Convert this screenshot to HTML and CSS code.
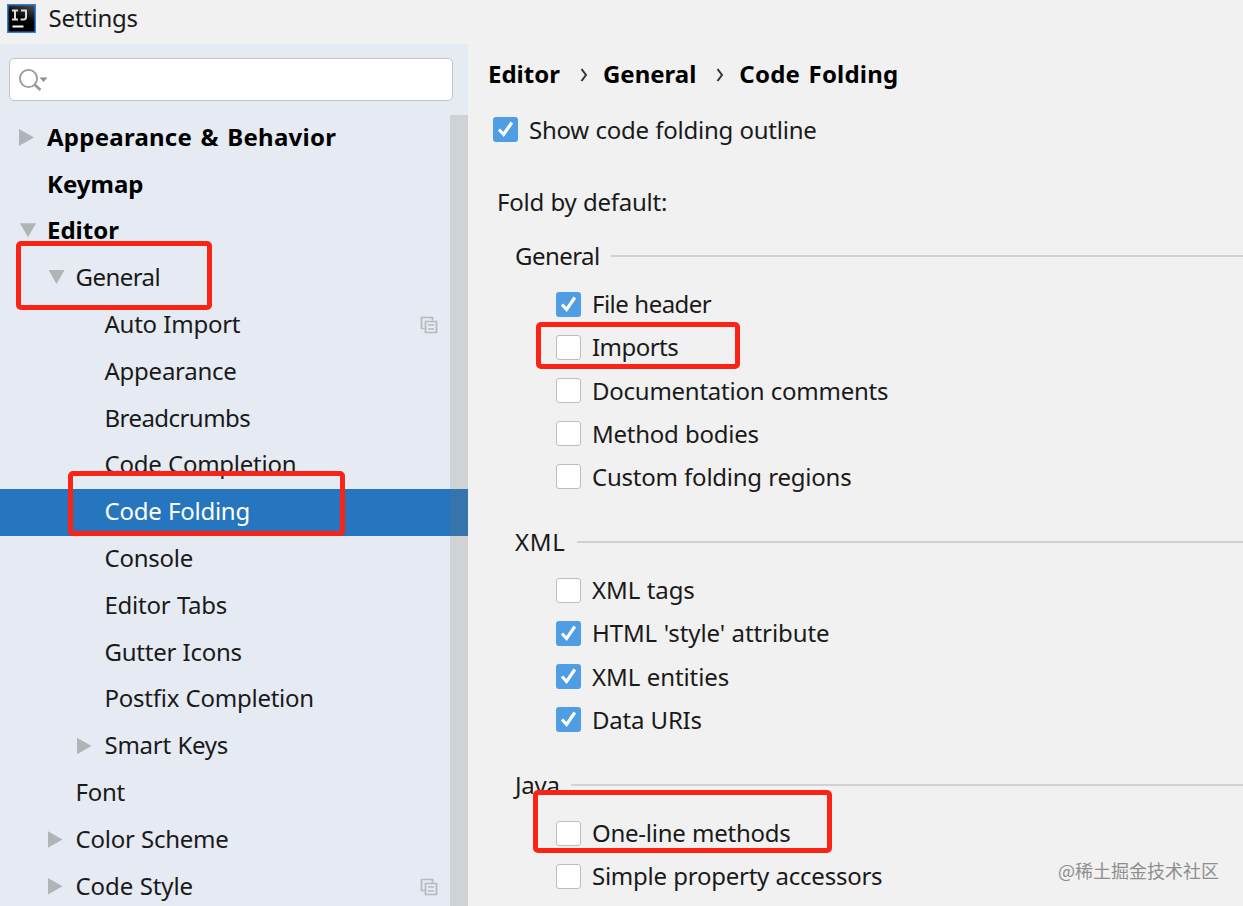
FILE: index.html
```html
<!DOCTYPE html>
<html lang="en">
<head>
    <meta charset="UTF-8">
    <meta name="viewport" content="width=device-width, initial-scale=1.0">
    <title>Settings</title>
    <link rel="stylesheet" href="styles.css">
</head>
<body>
    <svg width="0" height="0" class="defs">
        <symbol id="copy" viewBox="0 0 18 18">
            <path d="M4.5 12.5H1.5V1.5H12.5V4.5M5.5 5.5H16.5V16.5H5.5ZM8 9H14M8 13H14" fill="none" stroke="#b4babd" stroke-width="1.7"/>
        </symbol>
        <symbol id="check" viewBox="0 0 25 25">
            <path d="M6 12.5L10.6 17.5L18.8 5.5" fill="none" stroke="#fff" stroke-width="3.2"/>
        </symbol>
    </svg>

    <header class="titlebar">
        <svg class="logo" width="29" height="29" viewBox="0 0 29 29">
            <defs>
                <linearGradient id="logo-bg" x1="1" y1="0" x2="0.6" y2="1">
                    <stop offset="0" stop-color="#555"/>
                    <stop offset="0.6" stop-color="#000"/>
                </linearGradient>
            </defs>
            <rect x="0.75" y="0.75" width="27.5" height="27.5" fill="url(#logo-bg)" stroke="#2f7fd8" stroke-width="1.5"/>
            <path d="M5 6.5H11M8 6.5V15.5M5 15.5H11M14 6.5H19V13Q19 15.5 16.5 15.5H13.5" fill="none" stroke="#ddd" stroke-width="2"/>
            <path d="M5.5 22.5H16.5" stroke="#fff" stroke-width="2"/>
        </svg>
        <span class="title">Settings</span>
    </header>

    <div class="main">
        <aside class="sidebar">
            <div class="search">
                <svg width="32" height="26" viewBox="0 0 32 26">
                    <circle cx="10.5" cy="10.5" r="8.6" fill="none" stroke="#999" stroke-width="1.8"/>
                    <path d="M16.5 16.5L22.5 22" stroke="#999" stroke-width="2.6"/>
                    <path d="M21.5 9.5H29.5L25.5 14Z" fill="#8c8c8c"/>
                </svg>
            </div>
            <div class="tree-wrap">
                <ul class="tree">
                    <li class="l1 bold"><i class="arrow"></i><span class="wide">Appearance &amp; Behavior</span></li>
                    <li class="l1 bold"><span>Keymap</span></li>
                    <li class="l1 bold"><i class="arrow open"></i><span>Editor</span></li>
                    <li class="l2"><i class="arrow open"></i><span class="tight">General</span></li>
                    <li class="l3"><span>Auto Import</span><svg class="copy"><use href="#copy"/></svg></li>
                    <li class="l3"><span>Appearance</span></li>
                    <li class="l3"><span class="tight">Breadcrumbs</span></li>
                    <li class="l3"><span>Code Completion</span></li>
                    <li class="l3 selected"><span>Code Folding</span></li>
                    <li class="l3"><span>Console</span></li>
                    <li class="l3"><span>Editor Tabs</span></li>
                    <li class="l3"><span>Gutter Icons</span></li>
                    <li class="l3"><span>Postfix Completion</span></li>
                    <li class="l3"><i class="arrow"></i><span>Smart Keys</span></li>
                    <li class="l2"><span>Font</span></li>
                    <li class="l2"><i class="arrow"></i><span>Color Scheme</span></li>
                    <li class="l2"><i class="arrow"></i><span class="loose">Code Style</span><svg class="copy"><use href="#copy"/></svg></li>
                </ul>
                <div class="scrollbar"></div>
            </div>
        </aside>

        <main class="content">
            <div class="breadcrumb bold">
                <span>Editor</span>
                <svg width="8" height="14" viewBox="0 0 8 14"><path d="M1.5 1L6 7L1.5 13" fill="none" stroke="#333" stroke-width="2"/></svg>
                <span>General</span>
                <svg width="8" height="14" viewBox="0 0 8 14"><path d="M1.5 1L6 7L1.5 13" fill="none" stroke="#333" stroke-width="2"/></svg>
                <span class="last">Code Folding</span>
            </div>
            <div class="option outline"><svg class="box on"><use href="#check"/></svg><span>Show code folding outline</span></div>
            <p class="fold-label">Fold by default:</p>

            <section class="group">
                <h2><span class="tight">General</span></h2>
                <div class="option"><svg class="box on"><use href="#check"/></svg><span class="tight">File header</span></div>
                <div class="option"><svg class="box"></svg><span class="tight">Imports</span></div>
                <div class="option"><svg class="box"></svg><span>Documentation comments</span></div>
                <div class="option"><svg class="box"></svg><span>Method bodies</span></div>
                <div class="option"><svg class="box"></svg><span>Custom folding regions</span></div>
            </section>
            <section class="group">
                <h2><span class="caps">XML</span></h2>
                <div class="option"><svg class="box"></svg><span class="loose">XML tags</span></div>
                <div class="option"><svg class="box on"><use href="#check"/></svg><span class="loose">HTML 'style' attribute</span></div>
                <div class="option"><svg class="box on"><use href="#check"/></svg><span class="loose">XML entities</span></div>
                <div class="option"><svg class="box on"><use href="#check"/></svg><span>Data URIs</span></div>
            </section>
            <section class="group">
                <h2><span>Java</span></h2>
                <div class="option"><svg class="box"></svg><span>One-line methods</span></div>
                <div class="option"><svg class="box"></svg><span>Simple property accessors</span></div>
            </section>
        </main>
    </div>

    <!-- red highlight marks -->
    <div class="mark mark-general"></div>
    <div class="mark mark-folding"></div>
    <div class="mark mark-imports"></div>
    <div class="mark mark-methods"></div>
    <div class="watermark">@稀土掘金技术社区</div>
</body>
</html>
```
FILE: styles.css
```css
* {
    box-sizing: border-box;
}
body {
    margin: 0;
    width: 1243px;
    height: 906px;
    overflow: hidden;
    position: relative;
    background: #f1f1f1;
    color: #1a1a1a;
    font-family: "Noto Sans", "Open Sans", sans-serif;
    font-size: 24px;
    line-height: 32px;
    letter-spacing: -0.25px;
    word-spacing: 0.5px;
    white-space: nowrap;
}
.defs {
    position: absolute;
}
.bold {
    font-weight: bold;
    color: #000;
    letter-spacing: 0;
    word-spacing: 2px;
}
.wide {
    letter-spacing: 0.25px;
}
.last {
    letter-spacing: 0.2px;
}
.tight {
    letter-spacing: -0.55px;
}
.loose {
    letter-spacing: -0.1px;
}
.caps {
    letter-spacing: 0.7px;
}
.titlebar {
    height: 44px;
    padding: 4px 0 0 7px;
    display: flex;
    align-items: flex-start;
    gap: 12.5px;
}
.logo {
    flex: none;
}
.title {
    line-height: 28px;
}
.main {
    display: flex;
    height: 862px;
}
.sidebar {
    width: 468px;
    flex: none;
    background: #e6eaf2;
    padding-top: 14px;
}
.search {
    width: 444px;
    height: 43px;
    margin-left: 9px;
    padding: 9px 0 0 8px;
    background: #fff;
    border: 1.5px solid #c4c4c4;
    border-radius: 5px;
}
.search svg {
    display: block;
}
.tree-wrap {
    position: relative;
    margin-top: 13.7px;
    height: 792px;
}
.tree {
    list-style: none;
    margin: 0;
    padding: 0;
}
.tree li {
    height: 46.8px;
    display: flex;
    align-items: center;
    padding-right: 30px;
}
.tree li span {
    margin-bottom: 2.6px;
}
.tree .l1 {
    padding-left: 47px;
}
.tree .l2 {
    padding-left: 75.5px;
}
.tree .l3 {
    padding-left: 104.5px;
}
.tree .selected {
    background: #2675bf;
    color: #fff;
}
.arrow {
    width: 15px;
    height: 17px;
    margin-left: -28px;
    margin-right: 13px;
    margin-bottom: 1px;
    background: #b0b4b7;
    clip-path: polygon(0 0, 100% 50%, 0 100%);
}
.arrow.open {
    width: 16px;
    height: 14px;
    margin-left: -27px;
    margin-right: 11px;
    margin-bottom: 3px;
    clip-path: polygon(0 0, 100% 0, 50% 100%);
}
.copy {
    width: 18px;
    height: 18px;
    margin-left: auto;
}
.scrollbar {
    position: absolute;
    top: 0;
    right: 0;
    width: 18px;
    height: 100%;
    background: rgba(120, 120, 100, 0.2);
}
.content {
    flex: 1;
    padding-left: 20px;
}
.breadcrumb {
    display: flex;
    align-items: center;
    height: 32px;
    margin-top: 14px;
}
.breadcrumb svg {
    margin: 2px 15px 0 20px;
}
.option {
    display: flex;
    align-items: center;
    height: 43.2px;
    padding-left: 68px;
}
.box {
    width: 25px;
    height: 25px;
    margin-right: 11px;
    background: #fff;
    border: 1.5px solid #bdbdbd;
    border-radius: 3px;
}
.box.on {
    background: #4f9ee3;
    border: none;
}
.outline {
    margin-top: 18px;
    padding-left: 5px;
}
.fold-label {
    margin: 35px 0 22px 9px;
    height: 32px;
}
.group {
    margin-bottom: 27.8px;
}
.group h2 {
    display: flex;
    align-items: center;
    margin: 0 0 10.4px 27px;
    height: 32px;
    font-size: 24px;
    font-weight: normal;
}
.group h2::after {
    content: "";
    flex: 1;
    height: 2px;
    margin-left: 11px;
    background: #d2d2d2;
}
.mark {
    position: absolute;
    border: 5px solid #fb2216;
    border-radius: 5px;
}
.mark-general {
    left: 16px;
    top: 241px;
    width: 196px;
    height: 69px;
}
.mark-folding {
    left: 68px;
    top: 471px;
    width: 277px;
    height: 65px;
}
.mark-imports {
    left: 536px;
    top: 322px;
    width: 204px;
    height: 47px;
}
.mark-methods {
    left: 533px;
    top: 790px;
    width: 299px;
    height: 63px;
}
.watermark {
    position: absolute;
    left: 1058px;
    top: 857px;
    font-family: "Noto Sans CJK SC", sans-serif;
    font-size: 18px;
    line-height: 27px;
    letter-spacing: 0;
    color: #8e8e8e;
}
```
